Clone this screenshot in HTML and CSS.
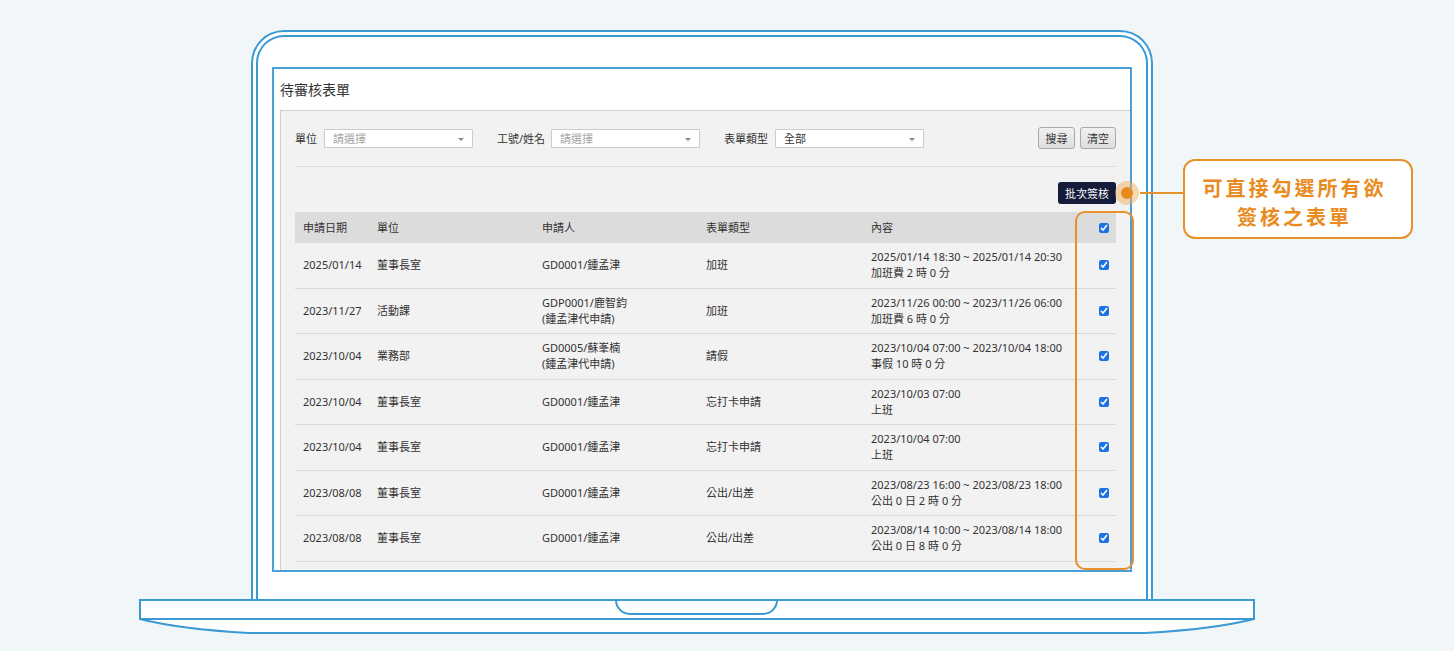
FILE: index.html
```html
<!DOCTYPE html>
<html lang="zh-Hant">
<head>
<meta charset="utf-8">
<title>待審核表單</title>
<link rel="stylesheet" href="styles.css">
</head>
<body>
<div class="page">
  <div class="laptop">
    <div class="screen-outer">
      <div class="screen-inner">
        <div class="frame">
          <div class="title">待審核表單</div>
          <div class="panel">
            <div class="filters">
              <span class="flabel w1">單位</span>
              <div class="select placeholder">請選擇</div>
              <span class="flabel w2">工號/姓名</span>
              <div class="select placeholder">請選擇</div>
              <span class="flabel w3">表單類型</span>
              <div class="select">全部</div>
              <div class="btns">
                <button class="btn b1">搜尋</button>
                <button class="btn b2">清空</button>
              </div>
            </div>
            <div class="sep"></div>
            <div class="batch-row"><button class="batch">批次簽核</button></div>
            <div class="table">
              <div class="row head">
                <div class="cell">申請日期</div>
                <div class="cell">單位</div>
                <div class="cell">申請人</div>
                <div class="cell">表單類型</div>
                <div class="cell">內容</div>
                <div class="cell chk"><input type="checkbox" checked></div>
              </div>
              <div class="row">
                <div class="cell">2025/01/14</div>
                <div class="cell">董事長室</div>
                <div class="cell">GD0001/鍾孟津</div>
                <div class="cell">加班</div>
                <div class="cell">2025/01/14 18:30 ~ 2025/01/14 20:30<br>加班費 2 時 0 分</div>
                <div class="cell chk"><input type="checkbox" checked></div>
              </div>
              <div class="row">
                <div class="cell">2023/11/27</div>
                <div class="cell">活動課</div>
                <div class="cell">GDP0001/鹿智鈞<br>(鍾孟津代申請)</div>
                <div class="cell">加班</div>
                <div class="cell">2023/11/26 00:00 ~ 2023/11/26 06:00<br>加班費 6 時 0 分</div>
                <div class="cell chk"><input type="checkbox" checked></div>
              </div>
              <div class="row">
                <div class="cell">2023/10/04</div>
                <div class="cell">業務部</div>
                <div class="cell">GD0005/蘇峯楠<br>(鍾孟津代申請)</div>
                <div class="cell">請假</div>
                <div class="cell">2023/10/04 07:00 ~ 2023/10/04 18:00<br>事假 10 時 0 分</div>
                <div class="cell chk"><input type="checkbox" checked></div>
              </div>
              <div class="row">
                <div class="cell">2023/10/04</div>
                <div class="cell">董事長室</div>
                <div class="cell">GD0001/鍾孟津</div>
                <div class="cell">忘打卡申請</div>
                <div class="cell">2023/10/03 07:00<br>上班</div>
                <div class="cell chk"><input type="checkbox" checked></div>
              </div>
              <div class="row">
                <div class="cell">2023/10/04</div>
                <div class="cell">董事長室</div>
                <div class="cell">GD0001/鍾孟津</div>
                <div class="cell">忘打卡申請</div>
                <div class="cell">2023/10/04 07:00<br>上班</div>
                <div class="cell chk"><input type="checkbox" checked></div>
              </div>
              <div class="row">
                <div class="cell">2023/08/08</div>
                <div class="cell">董事長室</div>
                <div class="cell">GD0001/鍾孟津</div>
                <div class="cell">公出/出差</div>
                <div class="cell">2023/08/23 16:00 ~ 2023/08/23 18:00<br>公出 0 日 2 時 0 分</div>
                <div class="cell chk"><input type="checkbox" checked></div>
              </div>
              <div class="row">
                <div class="cell">2023/08/08</div>
                <div class="cell">董事長室</div>
                <div class="cell">GD0001/鍾孟津</div>
                <div class="cell">公出/出差</div>
                <div class="cell">2023/08/14 10:00 ~ 2023/08/14 18:00<br>公出 0 日 8 時 0 分</div>
                <div class="cell chk"><input type="checkbox" checked></div>
              </div>
            </div>
          </div>
        </div>
      </div>
    </div>
    <svg class="base" width="1116" height="36" viewBox="0 0 1116 36">
      <path d="M1 1 H1115 V20 Q1076 30 1006 34 H110 Q40 30 1 20 Z" fill="#ffffff" stroke="none"/>
      <path d="M1 1 H1115 V20 H1 Z" fill="none" stroke="#3b99d4" stroke-width="2"/>
      <path d="M1 20 Q40 30 110 34 H1006 Q1076 30 1115 20" fill="none" stroke="#3b99d4" stroke-width="2"/>
      <path d="M477 1 A14 14 0 0 0 491 15 H624 A14 14 0 0 0 638 1" fill="none" stroke="#3b99d4" stroke-width="2"/>
    </svg>
  </div>

  <div class="highlight"></div>
  <div class="dot"></div>
  <div class="connector"></div>
  <div class="callout">
    <span class="cline">可直接勾選所有欲</span>
    <span class="cline">簽核之表單</span>
  </div>
</div>
</body>
</html>
```

FILE: styles.css
```css
* { box-sizing: border-box; }

html, body {
  margin: 0;
  padding: 0;
  background: #f1f6f8;
}

body {
  font-family: "Noto Sans", "Noto Sans CJK TC", sans-serif;
  color: #333;
}

.page {
  position: relative;
  width: 1454px;
  height: 651px;
  padding-top: 30px;
  overflow: hidden;
}

.laptop {
  display: flex;
  flex-direction: column;
  align-items: flex-start;
}

.screen-outer {
  margin-left: 251px;
  width: 902px;
  height: 569px;
  border: 2px solid #3b99d4;
  border-bottom: 0;
  border-radius: 33px 33px 0 0;
  padding: 3px 3px 0;
  background: #fff;
}

.screen-inner {
  height: 100%;
  border: 2px solid #3b99d4;
  border-bottom: 0;
  border-radius: 28px 28px 0 0;
  padding: 30px 14px 0;
  background: #fff;
}

.frame {
  height: 505px;
  border: 2px solid #4a9fd6;
  display: flex;
  flex-direction: column;
  overflow: hidden;
  background: #fff;
}

.title {
  height: 41px;
  line-height: 41px;
  padding-left: 6px;
  font-size: 14px;
  color: #333;
  flex: none;
}

.panel {
  flex: 1;
  margin-left: 6px;
  background: #f2f2f2;
  border-top: 1px solid #cfcfcf;
  border-left: 1px solid #cfcfcf;
  padding: 16px 14px 0 14px;
}

.filters {
  display: flex;
  align-items: center;
  height: 22px;
  font-size: 11px;
}

.flabel {
  flex: none;
  color: #333;
}
.flabel.w1 { width: 29px; }
.flabel.w2 { width: 54px; margin-left: 24px; }
.flabel.w3 { width: 51px; margin-left: 24px; }

.select {
  position: relative;
  flex: none;
  width: 149px;
  height: 19px;
  line-height: 17px;
  border: 1px solid #cccccc;
  background: #fff;
  padding-left: 8px;
  font-size: 11px;
  color: #333;
}
.select.placeholder { color: #a6a6a6; }
.select::after {
  content: "";
  position: absolute;
  right: 8px;
  top: 8px;
  border-left: 3px solid transparent;
  border-right: 3px solid transparent;
  border-top: 3px solid #888;
}

.btns {
  margin-left: auto;
  display: flex;
  gap: 5px;
}

.btn {
  height: 22px;
  padding: 0;
  border: 1px solid #a9a9a9;
  border-radius: 3px;
  background: linear-gradient(#f1f1f1, #dedede);
  font-family: inherit;
  font-size: 11px;
  color: #333;
}
.btn.b1 { width: 37px; }
.btn.b2 { width: 36px; }

.sep {
  margin-top: 17px;
  border-top: 1px solid #dcdcdc;
}

.batch-row {
  display: flex;
  justify-content: flex-end;
  margin-top: 15px;
}

.batch {
  width: 58px;
  height: 22px;
  padding: 0;
  border: 0;
  border-radius: 3px;
  background: #151c3b;
  color: #fff;
  font-family: inherit;
  font-size: 11px;
}

.table {
  margin-top: 8px;
  font-size: 11px;
}

.row {
  display: grid;
  grid-template-columns: 74px 165px 164px 165px 1fr 40px;
  height: 45.5px;
  border-bottom: 1px solid #d9d9d9;
  line-height: 16px;
}

.row.head {
  height: 31px;
  background: #dcdcdc;
  border-bottom: 0;
}

.cell {
  display: flex;
  flex-direction: column;
  justify-content: center;
  padding-left: 8px;
  color: #333;
  white-space: nowrap;
}

.cell.chk {
  align-items: flex-end;
  padding-right: 7px;
}

.cell.chk input {
  width: 10px;
  height: 10px;
  margin: 0;
  accent-color: #1c72e2;
}

.base {
  display: block;
  margin-left: 139px;
}

.highlight {
  position: absolute;
  left: 1075px;
  top: 211px;
  width: 59px;
  height: 359px;
  border: 2px solid #e8902a;
  border-radius: 10px;
}

.dot {
  position: absolute;
  left: 1121px;
  top: 187px;
  width: 12px;
  height: 12px;
  border-radius: 50%;
  background: #e8891c;
  box-shadow: 0 0 0 6px rgba(240, 176, 96, 0.5);
}

.connector {
  position: absolute;
  left: 1140px;
  top: 192px;
  width: 44px;
  height: 2px;
  background: #e8902a;
}

.callout {
  position: absolute;
  left: 1183px;
  top: 159px;
  width: 230px;
  height: 80px;
  border: 2px solid #e8902a;
  border-radius: 12px;
  background: #fff;
  display: flex;
  flex-direction: column;
  align-items: center;
  justify-content: center;
  padding: 6px 7px 0 0;
  font-family: "Noto Sans CJK TC", sans-serif;
  font-weight: 700;
  font-size: 20px;
  letter-spacing: 3px;
  color: #e98b1e;
}

.cline {
  display: block;
  height: 29px;
  line-height: 29px;
}
```
